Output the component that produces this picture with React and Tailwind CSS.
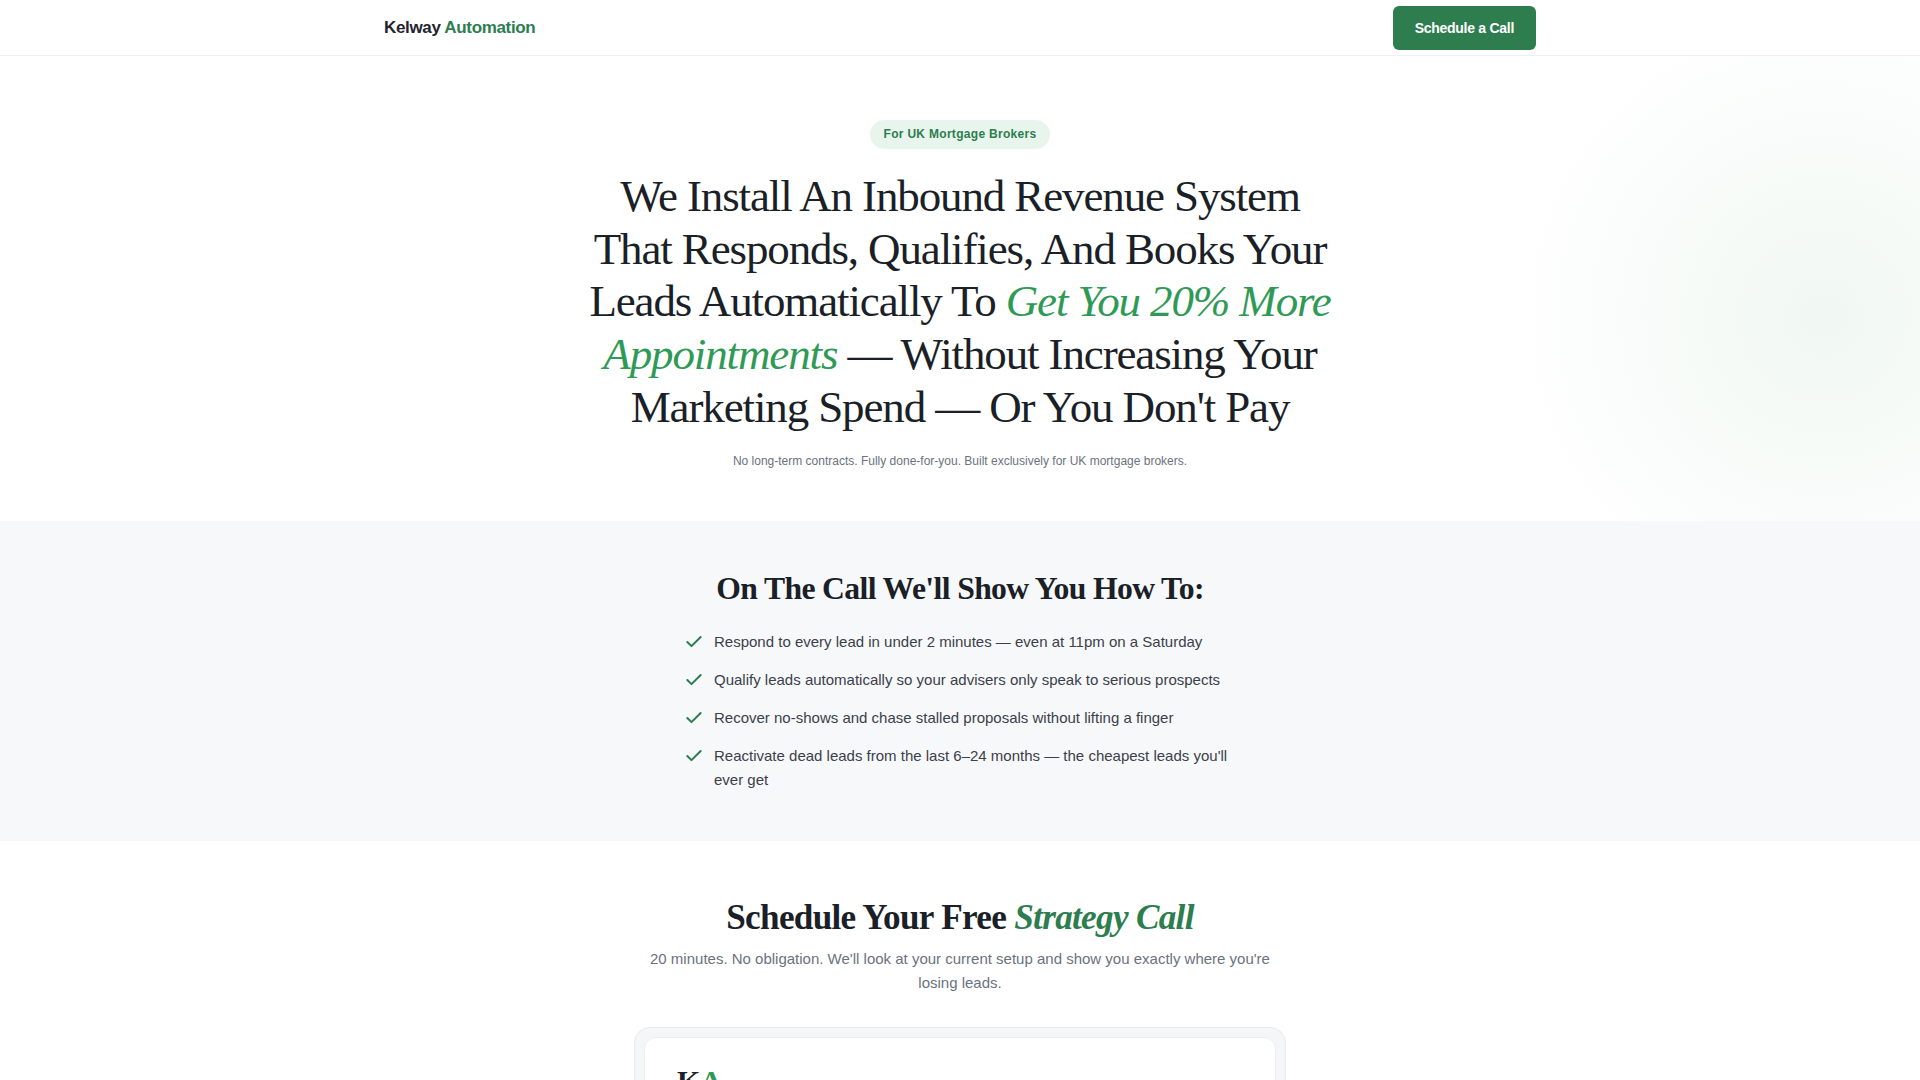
import React from "react";
import { Check } from "lucide-react";

const items = [
  "Respond to every lead in under 2 minutes — even at 11pm on a Saturday",
  "Qualify leads automatically so your advisers only speak to serious prospects",
  "Recover no-shows and chase stalled proposals without lifting a finger",
  "Reactivate dead leads from the last 6–24 months — the cheapest leads you'll ever get",
];

export default function App() {
  return (
    <div className="min-h-screen bg-white font-['Liberation_Sans',Arial,sans-serif] text-[#1b1f27]">
      <nav className="h-14 border-b border-[#eceef0] bg-white">
        <div className="mx-auto flex h-full max-w-[1152px] items-center justify-between">
          <div className="text-[17px] font-bold tracking-[-0.02em]">
            <span className="text-[#1f2530]">Kelway</span>{" "}
            <span className="text-[#2d7d4f]">Automation</span>
          </div>
          <button className="rounded-md bg-[#2d7d4f] px-[22px] py-3 text-sm leading-5 font-bold tracking-[-0.02em] text-white">
            Schedule a Call
          </button>
        </div>
      </nav>

      <section className="relative overflow-hidden pt-16 pb-[52px]">
        <div className="pointer-events-none absolute inset-0 bg-[radial-gradient(circle_at_95%_56%,rgba(46,150,80,0.07)_0,rgba(46,150,80,0.035)_160px,transparent_320px)]" />
        <div className="relative flex flex-col items-center text-center">
          <span className="rounded-full bg-[#e8f5ec] px-[14px] py-[6px] text-[12px] leading-[17px] font-bold tracking-[0.025em] text-[#2d7d4f]">
            For UK Mortgage Brokers
          </span>
          <h1 className="mt-[21px] w-full max-w-[756px] font-['Liberation_Serif','Times_New_Roman',serif] text-[45px] leading-[1.17] font-normal tracking-[-0.025em] text-[#1b1f27]">
            We Install An Inbound Revenue System That Responds, Qualifies, And Books Your Leads Automatically To{" "}
            <em className="text-[#2f9a55]">Get You 20% More Appointments</em> — Without Increasing Your Marketing Spend — Or You Don't Pay
          </h1>
          <p className="mt-5 text-xs leading-4 text-[#6b7280]">
            No long-term contracts. Fully done-for-you. Built exclusively for UK mortgage brokers.
          </p>
        </div>
      </section>

      <section className="bg-[#f7f8fa] pt-[49px] pb-[49px]">
        <h2 className="text-center font-['Liberation_Serif','Times_New_Roman',serif] text-[31.7px] leading-[1.2] font-bold tracking-[-0.02em] text-[#1b1f27]">
          On The Call We'll Show You How To:
        </h2>
        <ul className="mx-auto mt-[22px] flex w-[552px] flex-col gap-[14px]">
          {items.map((t) => (
            <li key={t} className="flex items-start gap-[10px] text-[15px] leading-6 text-[#3b414b]">
              <Check className="mt-0.5 h-5 w-5 shrink-0 text-[#2d7d4f]" strokeWidth={2.4} />
              <span>{t}</span>
            </li>
          ))}
        </ul>
      </section>

      <section className="bg-white pt-[56px] pb-16">
        <h2 className="text-center font-['Liberation_Serif','Times_New_Roman',serif] text-[35.2px] leading-[1.2] font-bold tracking-[-0.02em] text-[#1b1f27]">
          Schedule Your Free <em className="text-[#2d7d4f]">Strategy Call</em>
        </h2>
        <p className="mx-auto mt-2 max-w-[640px] text-center text-[15px] leading-6 text-[#6b7280]">
          20 minutes. No obligation. We'll look at your current setup and show you exactly where you're losing leads.
        </p>
        <div className="mx-auto mt-8 w-[652px] rounded-2xl border border-[#e7e9ec] bg-[#f5f6f8] p-[9px]">
          <div className="h-[600px] rounded-xl border border-[#eceef0] bg-white px-8 pt-[28px]">
            <div className="font-['Liberation_Serif','Times_New_Roman',serif] text-[30px] leading-none font-bold">
              <span className="text-[#1b1f27]">K</span>
              <span className="text-[#2f9a55]">A</span>
            </div>
          </div>
        </div>
      </section>
    </div>
  );
}
